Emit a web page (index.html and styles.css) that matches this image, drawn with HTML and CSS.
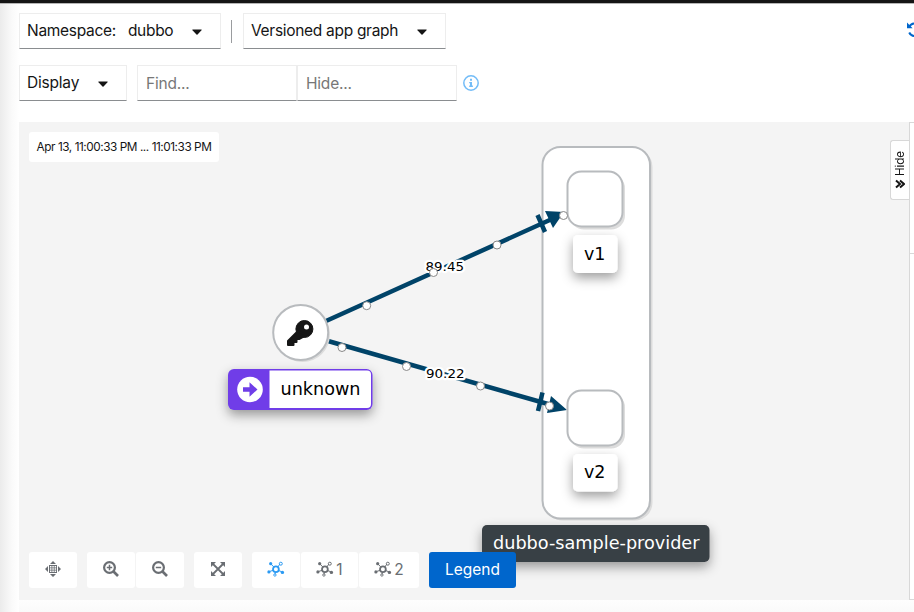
FILE: index.html
```html
<!DOCTYPE html>
<html lang="en">
<head>
<meta charset="utf-8">
<title>Graph</title>
<link rel="stylesheet" href="styles.css">
</head>
<body>
<svg width="0" height="0" class="defs">
  <defs>
    <symbol id="caret" viewBox="0 0 10 6"><path d="M.8.5h8.4q.9.1.3.8L5.5 5.400q-.5.5-1 0L.5 1.300Q-.1.6.8.5z"/></symbol>
    <symbol id="topology" viewBox="0 0 18 16">
      <g fill="none" stroke="currentColor"><circle cx="8.900" cy="8.200" r="2.900" stroke-width="1.800"/><path d="M4 3l3 3.200M10.800 6l2-2.800M2.500 10.500l4-1.300M11.600 9.500l3.200 1.300M8.500 11l-.5 2.300" stroke-width="1"/><circle cx="13.800" cy="2.700" r="1.500" stroke-width="1"/><circle cx="7.900" cy="14" r="1.200" stroke-width=".9"/></g>
      <g fill="currentColor"><circle cx="3.700" cy="2.700" r="1.600"/><circle cx="1.900" cy="10.900" r="1.600"/><circle cx="15.400" cy="11.400" r="1.700"/></g>
    </symbol>
  </defs>
</svg>
<div class="page">
  <header class="masthead"></header>
  <div class="body">
    <div class="gutter"></div>
    <main>
      <div class="toolbar">
        <button class="select namespace"><span>Namespace:</span><span class="value">dubbo</span><svg class="caret"><use href="#caret"/></svg></button>
        <span class="separator"></span>
        <button class="select graph-type"><span>Versioned app graph</span><svg class="caret"><use href="#caret"/></svg></button>
        <svg class="refresh" viewBox="0 0 16 16"><path d="M2 5.200A6.500 6.500 0 0 1 14 6M2.200 10.500A6.500 6.500 0 0 0 14 10" fill="none" stroke="#06c" stroke-width="2"/><path d="M0 .5V6.300H5.600z" fill="#06c"/></svg>
      </div>
      <div class="toolbar second">
        <button class="select display"><span>Display</span><svg class="caret"><use href="#caret"/></svg></button>
        <input class="find" placeholder="Find..." aria-label="Find"><input class="hide" placeholder="Hide..." aria-label="Hide">
        <svg class="info" viewBox="0 0 16 16"><circle cx="8" cy="8" r="7.200" fill="none" stroke="#73bcf7" stroke-width="1.500"/><path d="M7 3.800h2v2H7zM6.200 6.900H9v3.600h.9v1.400H6.200v-1.400H7V8.200h-.8z" fill="#73bcf7"/></svg>
      </div>
      <div class="workspace">
        <section class="canvas">
          <svg class="graph" width="890" height="478" viewBox="19 122 890 478">
            <defs>
              <filter id="label-shadow" x="-30%" y="-50%" width="160%" height="230%"><feDropShadow dx="0" dy="5" stdDeviation="6" flood-opacity=".38"/></filter>
            </defs>
            <rect x="545" y="149" width="107.500" height="371.500" rx="18" fill="#dcdcdc"/>
            <rect x="542.500" y="147" width="107.500" height="371.500" rx="18" fill="#fff" stroke="#b8bbbe" stroke-width="2"/>
            <g stroke="#004368" fill="#004368">
              <path d="M326 321L552 219M328 341L555 406" stroke-width="4.500"/>
              <path d="M537.500 215L545 232M542.500 392.500L538 411" stroke-width="4.500"/>
              <path d="M545 211l19 1-11 16zM551 396l16 14-20 3z" stroke="none"/>
            </g>
            <g class="node">
              <rect x="570" y="174.500" width="55" height="55" rx="14" fill="#ddd"/>
              <rect x="567.500" y="171.500" width="55" height="55" rx="14" fill="#fff" stroke="#b8bbbe" stroke-width="2"/>
              <rect x="570" y="393.500" width="55" height="55" rx="14" fill="#ddd"/>
              <rect x="567.500" y="390.500" width="55" height="55" rx="14" fill="#fff" stroke="#b8bbbe" stroke-width="2"/>
              <circle cx="302.500" cy="334.500" r="27.500" fill="#dcdcdc"/>
              <circle cx="300.700" cy="332.500" r="27.500" fill="#fff" stroke="#b8bbbe" stroke-width="2"/>
            </g>
            <g fill="#151515" stroke="#151515" stroke-linejoin="round"><circle cx="304.400" cy="329" r="8.500"/><path d="M298 331l-10 10v4h5.500v-3h3v-3h3l7-4z" stroke-width="2"/></g>
            <circle cx="306.500" cy="327" r="2.500" fill="#fff"/>
            <g class="rate">
              <text x="425.500" y="271" textLength="38.500" lengthAdjust="spacingAndGlyphs">89.45</text>
              <text x="426" y="378" textLength="38.500" lengthAdjust="spacingAndGlyphs">90.22</text>
            </g>
            <g fill="#fff" stroke="#888" stroke-width="1">
              <circle cx="366.700" cy="305.700" r="4"/><circle cx="433.500" cy="272.500" r="4"/><circle cx="497" cy="245" r="4"/><circle cx="563.500" cy="215.500" r="4"/>
              <circle cx="342" cy="347.500" r="4"/><circle cx="406.500" cy="366.500" r="4"/><circle cx="480.500" cy="386" r="4"/><circle cx="549.500" cy="406" r="4"/>
            </g>
            <g filter="url(#label-shadow)">
              <rect x="573" y="235" width="44.500" height="38" rx="5" fill="#fff"/>
              <rect x="573" y="454" width="44.500" height="37.500" rx="5" fill="#fff"/>
              <rect x="228" y="369" width="144.500" height="41" rx="6" fill="#6f3de8"/>
              <rect x="482" y="525" width="227.500" height="37" rx="5" fill="#393f44"/>
            </g>
            <path d="M269.500 370.500H367q4 0 4 4V404q0 4-4 4H269.500z" fill="#fff"/>
            <circle cx="250" cy="389.500" r="12.800" fill="#fff"/>
            <path d="M243 387.200h6.500v-5l8 7.300-8 7.300v-5H243z" fill="#6f3de8"/>
            <g class="label">
              <text x="584" y="260" textLength="21.500" lengthAdjust="spacingAndGlyphs">v1</text>
              <text x="584" y="478" textLength="21.500" lengthAdjust="spacingAndGlyphs">v2</text>
              <text x="280.500" y="395" textLength="80" lengthAdjust="spacingAndGlyphs">unknown</text>
              <text class="app" x="493" y="549" textLength="206.500" lengthAdjust="spacingAndGlyphs">dubbo-sample-provider</text>
            </g>
          </svg>
          <div class="overlay">
            <div class="time"><span>Apr 13, 11:00:33 PM ... 11:01:33 PM</span></div>
            <button class="side-toggle"><span>Hide</span><svg viewBox="0 0 10 10"><path d="M1 1.500L5 5 1 8.500M5 1.500L9 5 5 8.500" fill="none" stroke="#151515" stroke-width="2"/></svg></button>
            <div class="tools">
              <button class="w48 gap"><svg viewBox="0 0 16 16" width="16" height="16"><path d="M8 0l3 3H5zM8 16l3-3H5zM0 8l3-3v6zM16 8l-3-3v6z" fill="currentColor"/><path d="M4 4h8v8H4z" fill="currentColor"/><path d="M5 5h1.500v1.500H5zM7.300 5h1.500v1.500H7.300zM9.600 5h1.500v1.500H9.600zM5 7.300h1.500v1.500H5zM7.300 7.300h1.500v1.500H7.300zM9.600 7.300h1.500v1.500H9.600zM5 9.600h1.500v1.500H5zM7.300 9.600h1.500v1.500H7.300zM9.600 9.600h1.500v1.500H9.600z" fill="#fff"/></svg></button>
              <button class="w48"><svg viewBox="0 0 16 16" width="16" height="16"><circle cx="6.500" cy="6.500" r="5.400" fill="none" stroke="currentColor" stroke-width="2.200"/><path d="M10.500 10.500l4.500 4.500" stroke="currentColor" stroke-width="2.700"/><path d="M6.500 3.800v5.400M3.800 6.500h5.400" stroke="currentColor" stroke-width="1.500"/></svg></button>
              <button class="w48 gap"><svg viewBox="0 0 16 16" width="16" height="16"><circle cx="6.500" cy="6.500" r="5.400" fill="none" stroke="currentColor" stroke-width="2.200"/><path d="M10.500 10.500l4.500 4.500" stroke="currentColor" stroke-width="2.700"/><path d="M3.800 6.500h5.400" stroke="currentColor" stroke-width="1.500"/></svg></button>
              <button class="w48 gap"><svg viewBox="0 0 14 14" width="14" height="14"><path d="M2 2l10 10M12 2L2 12" stroke="currentColor" stroke-width="1.800"/><path d="M0 0h5L0 5zM14 0v5L9 0zM0 14V9l5 5zM14 14H9l5-5z" fill="currentColor"/></svg></button>
              <button class="w48 active"><svg width="18" height="16"><use href="#topology"/></svg></button>
              <button class="w57"><svg width="18" height="16"><use href="#topology"/></svg><span>1</span></button>
              <button class="w60 gap"><svg width="18" height="16"><use href="#topology"/></svg><span>2</span></button>
              <button class="legend">Legend</button>
            </div>
          </div>
        </section>
        <aside><div class="summary"></div></aside>
      </div>
    </main>
  </div>
</div>
</body>
</html>
```
FILE: styles.css
```css
* { box-sizing: border-box; }
body { margin: 0; width: 914px; height: 612px; overflow: hidden; background: #fff; color: #151515; font: 16px Inter, "Liberation Sans", sans-serif; }
button, input { font: inherit; color: inherit; margin: 0; }
.defs { display: none; }
.page { height: 612px; display: flex; flex-direction: column; }
.masthead { height: 4px; flex: none; background: #151515; border-bottom: 1px solid #b5b5b5; }
.body { display: flex; flex: 1; background: linear-gradient(#fff 590px, #fafafa); }
.gutter { width: 19px; flex: none; background: linear-gradient(90deg, #ebebeb, #fafafa 12px, #fff); }
main { width: 895px; flex: none; padding-top: 9px; }
.toolbar { display: flex; align-items: center; height: 36px; overflow: hidden; }
.toolbar > * { flex: none; }
.second { margin-top: 16px; }
.select, input { height: 36px; border: 1px solid #ededed; border-bottom-color: #8a8d90; background: #fff; padding: 0 8px 2px 7px; border-radius: 0; white-space: nowrap; }
.select { display: flex; align-items: center; font-size: 15.500px; }
.caret { width: 10px; height: 6px; margin-left: auto; margin-top: 3px; fill: #151515; flex: none; }
.namespace { width: 202px; padding-right: 18px; letter-spacing: -.3px; }
.value { margin-left: 12px; }
.separator { width: 1px; height: 23px; margin: 0 11px 0 10px; background: #9a9c9f; }
.graph-type { width: 203px; padding-right: 18px; letter-spacing: -.3px; }
.refresh { width: 16px; height: 16px; margin-left: 461px; margin-top: -2px; }
.display { width: 108px; padding-right: 18px; margin-right: 10px; letter-spacing: -.2px; }
input { width: 160px; padding: 1px 8px 0; font-size: 15.500px; letter-spacing: -.2px; outline: 0; }
input::placeholder { color: #777; opacity: 1; }
.info { width: 16px; height: 16px; margin-left: 6px; }
.workspace { display: flex; height: 478px; margin-top: 21px; }
.canvas { width: 890px; flex: none; position: relative; background: #f4f4f4; }
.graph { display: block; }
.label { font: 18px "DejaVu Sans", sans-serif; fill: #000; }
.label .app { fill: #fff; }
.rate { font: 13px "DejaVu Sans", sans-serif; fill: #000; stroke: #fff; stroke-width: 4.500px; stroke-linejoin: round; paint-order: stroke; }
.overlay { position: absolute; inset: 0; display: flex; flex-wrap: wrap; justify-content: space-between; align-content: space-between; padding: 10px 0 12px 10px; }
.time { width: 190px; height: 30px; display: flex; align-items: center; justify-content: center; background: #fff; border-radius: 3px; font-size: 11.800px; letter-spacing: -.45px; white-space: nowrap; }
.side-toggle { width: 19px; height: 60px; margin-top: 8px; display: flex; flex-direction: column; align-items: center; padding: 10px 0 0; border: 1px solid #d8d8d8; border-right: 0; border-radius: 3px 0 0 3px; background: #fff; font-size: 11.500px; }
.side-toggle span { writing-mode: vertical-rl; transform: rotate(180deg); height: 25px; line-height: 14px; }
.side-toggle svg { width: 10px; height: 10px; margin-top: 3px; flex: none; }
.tools { width: 880px; display: flex; }
.tools button { height: 36px; margin: 0 1px 0 0; padding: 0 0 2px; border: 0; border-radius: 3px; background: #fff; color: #6a6e73; display: flex; align-items: center; justify-content: center; font-size: 15.500px; }
.tools button.w48 { width: 48px; }
.tools button.w57 { width: 57px; }
.tools button.w60 { width: 60px; }
.tools button.gap { margin-right: 10px; }
.tools span { margin-left: 2px; }
.tools button.active { color: #2b9af3; }
.tools button.legend { width: 87px; margin: 0; padding: 0 0 1px; color: #fff; background: #06c; }
aside { width: 5px; border: 1px solid #d8d8d8; border-right: 0; background: #fff; }
.summary { height: 131px; border-bottom: 1px solid #d8d8d8; }
```
